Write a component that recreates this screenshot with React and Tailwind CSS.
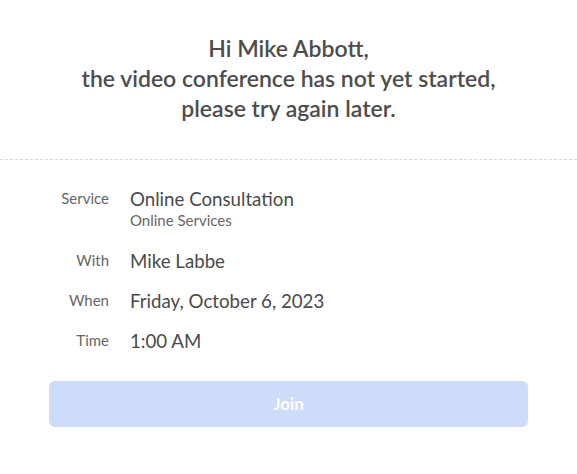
import React from 'react'

const rows = [
  { label: 'Service', value: 'Online Consultation', sub: 'Online Services' },
  { label: 'With', value: 'Mike Labbe' },
  { label: 'When', value: 'Friday, October 6, 2023' },
  { label: 'Time', value: '1:00 AM' },
]

export default function App() {
  return (
    <div className="w-[577px] h-[474px] bg-white font-['Lato',sans-serif]">
      <div className="pt-[33px] pb-[36px] text-center text-[23px] leading-[30px] font-semibold text-[#4d4d4d]">
        Hi Mike Abbott,
        <br />
        the video conference has not yet started,
        <br />
        please try again later.
      </div>
      <div className="border-t border-dashed border-[#d9d9d9]" />
      <div className="pt-[26px] pl-[49px] pr-[49px]">
        <div className="flex flex-col gap-[14px]">
          {rows.map((r) => (
            <div key={r.label} className="flex items-start">
              <div className="w-[60px] text-right text-[15px] leading-[24px] text-[#666]">
                {r.label}
              </div>
              <div className="ml-[21px]">
                <div className="text-[18.7px] leading-[26px] text-[#4a4a4a]">{r.value}</div>
                {r.sub && (
                  <div className="mb-[6px] text-[15px] leading-[16px] text-[#666]">{r.sub}</div>
                )}
              </div>
            </div>
          ))}
        </div>
        <button className="mt-[27px] w-[479px] h-[46px] rounded-[6px] bg-[#cddcf9] text-white font-bold text-[17px]">
          Join
        </button>
      </div>
    </div>
  )
}
